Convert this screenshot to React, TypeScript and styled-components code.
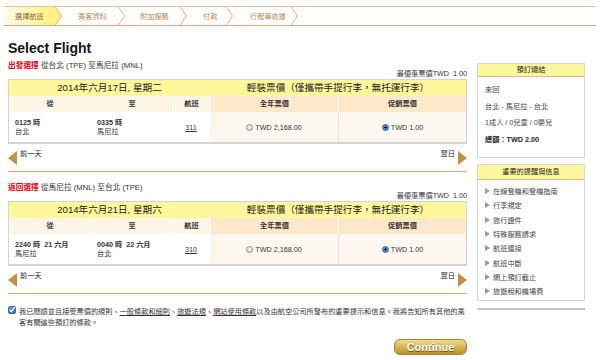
import React from 'react'
import styled, { createGlobalStyle } from 'styled-components'

const GlobalStyle = createGlobalStyle`
  html, body {
    margin: 0;
    padding: 0;
    background: #fff;
  }
  body {
    font-family: "Liberation Sans", "Noto Sans CJK TC", sans-serif;
    color: #333;
  }
`

const steps = [
  { label: '選擇航班', width: 58, pad: 11, active: true },
  { label: '乘客資料', width: 63, pad: 16 },
  { label: '附加服務', width: 62, pad: 15 },
  { label: '付款', width: 46, pad: 16 },
  { label: '行程單收據', width: 65, pad: 17 },
]

const flights = [
  {
    kind: '出發選擇',
    route: '從台北 (TPE) 至馬尼拉 (MNL)',
    date: '2014年六月17日, 星期二',
    depTime: '0125 時',
    depCity: '台北',
    arrTime: '0335 時',
    arrCity: '馬尼拉',
    flightNo: '311',
  },
  {
    kind: '返回選擇',
    route: '從馬尼拉 (MNL) 至台北 (TPE)',
    date: '2014年六月21日, 星期六',
    depTime: '2240 時  21 六月',
    depCity: '馬尼拉',
    arrTime: '0040 時  22 六月',
    arrCity: '台北',
    flightNo: '310',
  },
]

const notices = [
  '在線登機和登機指南',
  '行李規定',
  '旅行證件',
  '特殊服務請求',
  '航班連接',
  '航班中斷',
  '網上預訂截止',
  '旅遊稅和機場費',
]

const ChevronIcon = ({ active }: { active?: boolean }) => (
  <svg width="8" height="18" viewBox="0 0 8 18">
    {active && <polygon points="0,0 1,0 7.5,9 1,18 0,18" fill="#fff27c" />}
    <polyline points="1,-0.5 7.5,9 1,18.5" fill="none" stroke="#e2b088" strokeWidth="1" />
  </svg>
)

const CheckIcon = () => (
  <svg width="8" height="8" viewBox="0 0 8 8">
    <defs>
      <linearGradient id="cb" x1="0" y1="0" x2="0" y2="1">
        <stop offset="0" stopColor="#6fa8ee" />
        <stop offset="1" stopColor="#2a62c0" />
      </linearGradient>
    </defs>
    <rect x="0.5" y="0.5" width="7" height="7" rx="1.5" fill="url(#cb)" stroke="#2b4f8c" strokeWidth="0.8" />
    <path d="M2 4.2 L3.4 5.8 L6.2 1.8" fill="none" stroke="#fff" strokeWidth="1.3" strokeLinecap="round" />
  </svg>
)

export default function App() {
  return (
    <>
      <GlobalStyle />
      <Page>
        <Stepper>
          {steps.map(s => (
            <Step key={s.label} $width={s.width}>
              <StepLabel $active={s.active} $pad={s.pad}>{s.label}</StepLabel>
              <ChevronIcon active={s.active} />
            </Step>
          ))}
        </Stepper>

        <Heading>Select Flight</Heading>

        <Columns>
          <Main>
            {flights.map(f => (
              <FlightSection key={f.kind}>
                <RouteLabel>
                  <RouteKind>{f.kind}</RouteKind> {f.route}
                </RouteLabel>
                <BestPrice>最優惠票價TWD  1.00</BestPrice>
                <Table>
                  <BandCell $span={3}>{f.date}</BandCell>
                  <BandCell $span={2}>輕裝票價（僅攜帶手提行李，無托運行李）</BandCell>

                  <ColHead $first>從</ColHead>
                  <ColHead>至</ColHead>
                  <ColHead>航班</ColHead>
                  <ColHead $fare>全年票價</ColHead>
                  <ColHead $fare>促銷票價</ColHead>

                  <PlaceCell>
                    <Time>{f.depTime}</Time>
                    <span>{f.depCity}</span>
                  </PlaceCell>
                  <PlaceCell>
                    <Time>{f.arrTime}</Time>
                    <span>{f.arrCity}</span>
                  </PlaceCell>
                  <FlightNoCell>
                    <u>{f.flightNo}</u>
                  </FlightNoCell>
                  <FareCell>
                    <Radio />
                    TWD 2,168.00
                  </FareCell>
                  <FareCell $divider>
                    <Radio $checked />
                    TWD 1.00
                  </FareCell>
                </Table>
                <NavRow>
                  <NavLink>
                    <PrevArrow />
                    前一天
                  </NavLink>
                  <NavLink>
                    翌日
                    <NextArrow />
                  </NavLink>
                </NavRow>
              </FlightSection>
            ))}

            <Agreement>
              <CheckIcon />
              <AgreementText>
                我已閱讀並且接受票價的規則、<TermLink>一般條款和細則</TermLink>、<TermLink>旅遊法規</TermLink>、<TermLink>網站使用條款</TermLink>以及由航空公司所發布的重要提示和信息。我將告知所有其他的乘客有關這些預訂的條款。
              </AgreementText>
            </Agreement>

            <ButtonRow>
              <ContinueButton>Continue</ContinueButton>
            </ButtonRow>
          </Main>

          <Sidebar>
            <SideBox>
              <SideHead>預訂總結</SideHead>
              <SummaryBody>
                <div>來回</div>
                <div>台北 - 馬尼拉 - 台北</div>
                <div>1成人 / 0兒童 / 0嬰兒</div>
                <Total>總額：TWD 2.00</Total>
              </SummaryBody>
            </SideBox>
            <SideBox $gap>
              <SideHead $tall>重要的提醒與信息</SideHead>
              <NoticeList>
                {notices.map(n => (
                  <NoticeItem key={n}>
                    <Bullet />
                    {n}
                  </NoticeItem>
                ))}
              </NoticeList>
            </SideBox>
            <SideRule />
          </Sidebar>
        </Columns>
      </Page>
    </>
  )
}

const Page = styled.div`
  width: 600px;
  height: 360px;
  overflow: hidden;
  padding-top: 6px;
  box-sizing: border-box;
`

const Stepper = styled.div`
  margin: 0 4px;
  height: 20px;
  box-sizing: border-box;
  border-top: 1px solid #e9bf98;
  border-bottom: 1px solid #d9aa7e;
  display: flex;
`

const Step = styled.div<{ $width: number }>`
  width: ${p => p.$width}px;
  display: flex;
  align-items: stretch;
`

const StepLabel = styled.div<{ $active?: boolean; $pad: number }>`
  flex: 1;
  display: flex;
  align-items: center;
  padding-left: ${p => p.$pad}px;
  font-size: 7.2px;
  color: ${p => (p.$active ? '#8e6a3c' : '#b98654')};
  background: ${p => (p.$active ? 'linear-gradient(to right, #fffbe2 10%, #fff27c)' : 'none')};
`

const Heading = styled.h1`
  margin: 14px 0 0 8px;
  font: bold 14px/16px "Liberation Sans", sans-serif;
  color: #151515;
`

const Columns = styled.div`
  display: flex;
  gap: 10px;
  margin: 6px 0 0 8px;
`

const Main = styled.main`
  width: 459px;
`

const FlightSection = styled.section`
  padding-bottom: 6px;
  border-bottom: 1px solid #dea86c;
  margin-bottom: 12px;
`

const RouteLabel = styled.div`
  font-size: 7.7px;
  line-height: 8px;
  white-space: nowrap;
`

const RouteKind = styled.span`
  color: #e60012;
  font-weight: bold;
`

const BestPrice = styled.div`
  text-align: right;
  font-size: 7.2px;
  line-height: 8px;
  white-space: pre;
`

const Table = styled.div`
  margin-top: 1px;
  width: 459px;
  box-sizing: border-box;
  display: grid;
  grid-template-columns: 82px 81px 38px 128px 128px;
  border: 1px solid #d4d4d4;
  border-bottom-width: 2px;
`

const BandCell = styled.div<{ $span: number }>`
  grid-column: span ${p => p.$span};
  height: 16px;
  line-height: 16px;
  background: #fff79c;
  text-align: center;
  font-size: 9.6px;
  color: #222;
  white-space: nowrap;
`

const ColHead = styled.div<{ $fare?: boolean; $first?: boolean }>`
  height: 16px;
  line-height: 16px;
  text-align: center;
  font-size: 7.2px;
  font-weight: bold;
  background: ${p => (p.$fare ? '#fde8c9' : '#fdf6e7')};
  border-left: ${p => (p.$first ? 'none' : '1px solid #fff')};
`

const PlaceCell = styled.div`
  height: 30px;
  padding-left: 6px;
  display: flex;
  flex-direction: column;
  justify-content: center;
  font-size: 7.2px;
  line-height: 9px;
  background: #fff;
`

const Time = styled.span`
  font-weight: bold;
  white-space: pre;
`

const FlightNoCell = styled.div`
  height: 30px;
  display: flex;
  align-items: center;
  justify-content: center;
  font-size: 7.2px;
`

const FareCell = styled.div<{ $divider?: boolean }>`
  height: 30px;
  display: flex;
  align-items: center;
  justify-content: center;
  gap: 2px;
  font-size: 7.2px;
  background: #fdf8ef;
  border-left: ${p => (p.$divider ? '1px solid #ece2d2' : 'none')};
`

const Radio = styled.span<{ $checked?: boolean }>`
  width: 7px;
  height: 7px;
  border-radius: 50%;
  box-sizing: border-box;
  border: 1px solid ${p => (p.$checked ? '#2a5da6' : '#8a8a8a')};
  background: ${p =>
    p.$checked
      ? 'radial-gradient(circle, #111 0 28%, #6aa6ea 38%, #2f6cc2 100%)'
      : 'linear-gradient(#f4f4f4, #dcdcdc)'};
`

const NavRow = styled.div`
  margin-top: 6px;
  height: 15px;
  display: flex;
  justify-content: space-between;
`

const NavLink = styled.div`
  display: flex;
  align-items: flex-start;
  gap: 3px;
  font-size: 7.2px;
  line-height: 7px;
  color: #222;
`

const PrevArrow = styled.span`
  margin-top: 1px;
  width: 0;
  height: 0;
  border-top: 7px solid transparent;
  border-bottom: 7px solid transparent;
  border-right: 9px solid #c98b48;
`

const NextArrow = styled.span`
  margin-top: 1px;
  width: 0;
  height: 0;
  border-top: 7px solid transparent;
  border-bottom: 7px solid transparent;
  border-left: 9px solid #c98b48;
`

const Agreement = styled.div`
  margin-top: 6px;
  display: flex;
  gap: 3px;
  align-items: flex-start;
`

const AgreementText = styled.p`
  margin: 0;
  width: 448px;
  font-size: 7.2px;
  line-height: 11px;
  color: #333;
`

const TermLink = styled.span`
  text-decoration: underline;
`

const ButtonRow = styled.div`
  margin-top: 11px;
  display: flex;
  justify-content: flex-end;
`

const ContinueButton = styled.button`
  width: 73px;
  height: 16px;
  padding: 0;
  border: 1px solid #a8822c;
  border-radius: 6px;
  background: linear-gradient(#f0dc8e, #d6b356 50%, #b8902e);
  color: #fff;
  font: bold 11px/14px "Liberation Sans", sans-serif;
  text-shadow: 0 1px 0 #6e4f12;
`

const Sidebar = styled.aside`
  width: 108px;
  margin-top: 1px;
  display: flex;
  flex-direction: column;
`

const SideBox = styled.div<{ $gap?: boolean }>`
  border: 1px solid #d6d6d6;
  margin-top: ${p => (p.$gap ? '6px' : '0')};
`

const SideHead = styled.div<{ $tall?: boolean }>`
  height: ${p => (p.$tall ? 14 : 12)}px;
  line-height: ${p => (p.$tall ? 14 : 12)}px;
  background: #fff79c;
  border-bottom: 1px solid #f0b48c;
  text-align: center;
  font-size: 7.2px;
  color: #222;
`

const SummaryBody = styled.div`
  padding: 5px 7px 9px;
  font-size: 7.2px;
  line-height: 16.5px;
  color: #444;
`

const Total = styled.div`
  font-weight: bold;
  color: #222;
`

const NoticeList = styled.ul`
  list-style: none;
  margin: 0;
  padding: 4px 7px 2px;
`

const NoticeItem = styled.li`
  display: flex;
  align-items: center;
  gap: 3px;
  height: 14.3px;
  font-size: 7.2px;
  color: #444;
`

const Bullet = styled.span`
  width: 0;
  height: 0;
  border-top: 3px solid transparent;
  border-bottom: 3px solid transparent;
  border-left: 5px solid #9a9a9a;
`

const SideRule = styled.div`
  margin-top: 7px;
  height: 2px;
  background: #c6c6c6;
`
